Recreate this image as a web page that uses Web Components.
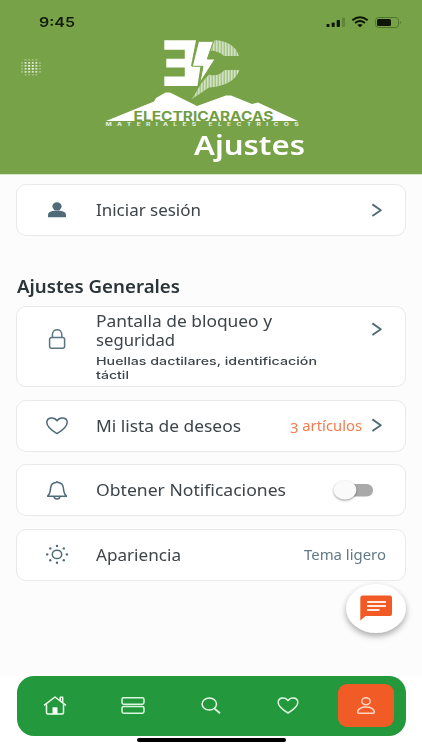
<!DOCTYPE html>
<html lang="es"><head><meta charset="utf-8"><title>Ajustes</title>
<style>html,body{margin:0;height:750px;overflow:hidden;background:#fcfcfd}</style></head>
<body><settings-app></settings-app>
<script>
const define=(name,html,init)=>customElements.define(name,class extends HTMLElement{
  connectedCallback(){
    if(this.shadowRoot)return;
    const t=document.createElement('template');t.innerHTML=html;
    this.attachShadow({mode:'open'}).append(t.content.cloneNode(true));
    if(init)init(this,this.shadowRoot);
  }
});

/* One line of text, stretched horizontally to the width given in "w". */
define('fit-text',`<style>:host{display:block;white-space:nowrap;flex:none}span{display:inline-block;transform-origin:0 50%}</style><span><slot></slot></span>`,(el,root)=>{
  const w=+el.getAttribute('w'),s=root.querySelector('span');
  el.style.width=w+'px';
  s.style.transform='scaleX('+w/s.getBoundingClientRect().width+')';
});

const icons={
  person:['#4f6b78','<g fill="#4f6b78" stroke="none"><ellipse cx="13" cy="8.3" rx="4.6" ry="4"/><path d="M4 19.2v-2.4c0-3.2 5-4.4 9-4.4s9 1.2 9 4.4v2.4z"/></g>'],
  lock:['#5a7480','<rect x="5.6" y="10.5" width="15" height="10.7" rx="2"/><path d="M8.4 10.3V7.8C8.4 1 17.800 1 17.800 7.800V10.300"/>'],
  heart:['#4f6b78','<path d="M13 20.600C8 17.500 2.800 13.500 2.800 9.400C2.800 4.200 10.300 3.400 13 7.800C15.700 3.400 23.200 4.200 23.200 9.400C23.200 13.500 18 17.500 13 20.600z"/>'],
  bell:['#4f6b78','<path d="M3.600 18.200C6.500 16 6 13.500 6.700 9.500C7.200 6.500 9.500 4.700 12 4.500Q13 3 14 4.500C16.500 4.700 18.800 6.500 19.300 9.500C20 13.500 19.500 16 22.400 18.200zM10 18.600C10.400 21.700 15.600 21.700 16 18.600"/>'],
  sun:['#4f6b78','<ellipse cx="13" cy="12.400" rx="4.700" ry="4.200"/><g fill="#4f6b78" stroke="none"><circle cx="13" cy="4" r="1.200"/><circle cx="13" cy="20.700" r="1.200"/><circle cx="3.200" cy="12.400" r="1.200"/><circle cx="22.900" cy="12.400" r="1.200"/><circle cx="6.300" cy="6.400" r="1.200"/><circle cx="19.800" cy="6.400" r="1.200"/><circle cx="6.300" cy="18.300" r="1.200"/><circle cx="19.800" cy="18.300" r="1.200"/></g>'],
  home:['#eaffea','<path d="M2 12.300L13 4L24 12.300M4.500 11.500V19.500Q4.500 21 6 21H20Q21.500 21 21.500 19.500V11.500M18.300 7.500V4.300H20.700V9.500"/><path d="M10.500 21v-6.700h5V21z" fill="#fff" stroke="none"/>'],
  rows:['#dcf7de','<rect x="2" y="4.700" width="22" height="6.500" rx="1.700"/><rect x="2" y="13.600" width="22" height="6.600" rx="1.700"/>'],
  search:['#e4fae5','<ellipse cx="11.300" cy="11" rx="7.200" ry="6"/><path d="M16.500 15.600L22 20.300" stroke-width="1.800"/>'],
  love:['#e4fae5','<path d="M13 20C8.500 17.300 3.200 13.400 3.200 9.600C3.200 4.300 10.300 3.500 13 7.600C15.700 3.500 22.800 4.300 22.800 9.600C22.800 13.400 17.500 17.300 13 20z"/>'],
  user:['#ffd6c5','<ellipse cx="13" cy="8.200" rx="4.200" ry="3.500"/><path d="M4.700 19.300C4.200 12.200 21.800 12.200 21.300 19.300Q21.300 20.200 20.300 20.200H5.700Q4.700 20.200 4.700 19.300z"/>'],
  chevron:['#526b76','<path d="M9.400 6.400L17.800 12.200L9.400 18" stroke-width="1.900"/>']
};
define('line-icon',`<style>:host{display:block;width:26px;height:25px;flex:none}svg{display:block}</style><svg width="26" height="25" viewBox="0 0 26 25" fill="none" stroke-width="1.500" stroke-linejoin="round"></svg>`,(el,root)=>{
  const [c,m]=icons[el.getAttribute('name')],s=root.querySelector('svg');
  s.setAttribute('stroke',c);s.innerHTML=m;
});

define('status-bar',`<style>
:host{display:flex;justify-content:space-between;height:34px;padding:11px 20px 0 39px;box-sizing:border-box;color:#111c08}
fit-text{font:600 13px/23px Inter,sans-serif}
svg{display:block}
</style><fit-text w="36">9:45</fit-text>
<svg width="77" height="23" viewBox="325 11 77 23"><g fill="#0d1608"><rect x="326.500" y="24" width="3" height="3" rx=".8"/><rect x="331.700" y="22.500" width="3" height="4.500" rx=".8"/><rect x="336.700" y="20" width="3.200" height="7" rx=".8"/></g><rect x="342" y="17.500" width="3" height="9.500" rx=".8" fill="#5f853b"/><g fill="none" stroke="#0d1608" stroke-width="1.900"><path d="M352.300 20.200Q360 14.400 367.700 20.200M355 23Q360 19 365 23"/></g><path d="M357.300 25Q360 23 362.700 25L360 27.200z" fill="#0d1608"/><rect x="375.500" y="17.500" width="23" height="10" rx="3" fill="none" stroke="#51742f"/><rect x="377" y="19" width="14" height="7" rx="1.500" fill="#0d1608"/><path d="M400 21v3q2-1.500 0-3" fill="#51742f"/></svg>`);

define('brand-logo',`<style>:host{display:block;width:196px;height:90px}svg{display:block}text{font-family:Inter,"Liberation Sans",sans-serif}</style>
<svg width="196" height="90" viewBox="104 38 196 90"><defs><pattern id="s" width="3" height="4" patternUnits="userSpaceOnUse"><rect width="3" height="4" fill="#a5c488"/><rect width="1.500" height="4" fill="#d3e2c5"/></pattern></defs>
<path fill="url(#s)" d="M214.500 40.300C227 40.500 236 46 239 56H224Q219.500 51 210 50.500zM239.500 70C236 80.500 225 86.500 209 87.500L192 99L201.500 83L209 74.500Q218 77.500 224.500 70z"/>
<path fill="#fff" d="M164.300 40.300H196L191 66H200.500L197.500 86H164.300V76.500H184.800V67.500H166.300V58.700H184.800V49.800H164.300z"/>
<path fill="#fff" stroke="#78a247" stroke-width="1" d="M198.500 41.300H213.500L207.300 59H215L199.800 83L203 66.300H192.300z"/>
<path fill="#fff" d="M106 121L154 101.500L156 98L165.500 92.500H170L197 106L226 95.500H231L252 104L258 102.500L298 121z"/>
<text x="133.500" y="120.800" font-size="13" font-weight="700" fill="#719d42" textLength="140" lengthAdjust="spacingAndGlyphs">ELECTRICARACAS</text>
<text transform="translate(105.500 125.500) scale(1.400 1)" font-size="4.800" font-weight="700" fill="#e8f1de" textLength="138">MATERIALES ELÉCTRICOS</text></svg>`);

define('app-header',`<style>
:host{display:block;height:175px;background:#78a247;color:#fff;border-bottom:1px solid #d8e6ca;box-sizing:border-box}
.row{display:flex;height:96px}.dots{width:84px;padding:24px 0 0 20px}
brand-logo{margin-top:4px}
.title{display:flex;padding-left:194px}
fit-text{font:600 26.500px/34px "Noto Sans",sans-serif;margin-top:-2px}
</style><status-bar></status-bar><div class="row"><div class="dots"><svg width="22" height="19" viewBox="0 0 22 19"></svg></div><brand-logo></brand-logo></div><div class="title"><fit-text w="111">Ajustes</fit-text></div>`,(el,root)=>{
  let m='';
  for(let r=0;r<6;r++)for(let c=0;c<6;c++){
    const d=Math.hypot(c-2.5,r-2.5);
    if(d<3.5)m+=`<rect x="${1+c*3.6}" y="${1+r*3}" width="1.900" height="1.700" fill="#fff" opacity="${d<1?.95:d<2.3?.75:.3}"/>`;
  }
  root.querySelector('svg').innerHTML=m;
});

define('setting-card',`<style>
:host{display:flex;align-items:center;box-sizing:border-box;height:var(--h,52px);margin-left:16px;width:389.500px;border:1.500px solid #e9e9ed;border-radius:10px;background:#fff;padding:0 15.500px 0 26.500px;color:#3d454a;font:450 15.500px/20px "Noto Sans",sans-serif}
.body{flex:1;margin-left:26px}
.icon{margin-top:var(--icon-shift,0)}
.end{display:flex;align-items:center}
</style><div class="icon"></div><div class="body"><slot></slot></div><div class="end"><slot name="end"></slot></div>`,(el,root)=>{
  root.querySelector('.icon').innerHTML=`<line-icon name="${el.getAttribute('icon')}"></line-icon>`;
});

define('toggle-switch',`<style>:host{display:block;width:42px;height:24px}svg{display:block;overflow:visible}</style>
<svg width="42" height="24" viewBox="0 0 42 24"><rect x="8" y="6" width="32" height="12.500" rx="6.250" fill="#a9a9a9"/><ellipse cx="12" cy="12" rx="11.300" ry="9.500" fill="#fafafa" style="filter:drop-shadow(0 1px 1.200px #0006)"/></svg>`);

define('chat-button',`<style>:host{display:block;position:absolute;left:346px;top:584px;width:60px;height:49px;border-radius:50%;background:#fff;box-shadow:0 3px 6px #0005}svg{display:block}</style>
<svg width="60" height="49" viewBox="346 584 60 49"><path fill="#f15a24" d="M362.500 595.500H389.500Q392 595.500 392 598V613.500Q392 616 389.500 616H365.500L360.300 620.500V598Q360.300 595.500 362.500 595.500z"/><path stroke="#ffe9e0" stroke-width="2.200" d="M367 602H386M367 606H386M367 610H379.500"/></svg>`);

define('tab-bar',`<style>
:host{display:block;height:74.500px;background:#fff;padding:0 16.500px}
nav{display:grid;grid-template-columns:repeat(5,77.700px);height:60.500px;border-radius:17px;background:#23983c;box-sizing:border-box;align-items:center;justify-items:center}
.active{display:grid;place-items:center;width:56px;height:43px;border-radius:9px;background:#f15b26}
i{display:block;width:149px;height:4px;border-radius:2px;background:#000;margin:2px auto 0}
</style><nav><line-icon name="home"></line-icon><line-icon name="rows"></line-icon><line-icon name="search"></line-icon><line-icon name="love"></line-icon><div class="active"><line-icon name="user"></line-icon></div></nav><i></i>`);

define('settings-app',`<style>
:host{display:flex;flex-direction:column;position:relative;width:422px;height:750px;overflow:hidden;background:#fcfcfd}
main{flex:1;padding-top:9px;display:flex;flex-direction:column}
h2{margin:38px 0 7px 17px;height:25px;font:600 17.500px/25px "Noto Sans",sans-serif;color:#2a3539}
.list{display:flex;flex-direction:column;gap:12.500px}
.tall{--h:81px;--icon-shift:-14px}.lines>fit-text{height:19.500px;line-height:19.500px}
.lines>.sub{font:450 11px/14px Inter,sans-serif;height:14px;line-height:14px}
.lines>.first{margin-top:3px}
.up{margin-top:-34px}
.orange{color:#f47b50;font-size:13.500px;margin-right:1px}.orange b{font-weight:450;position:relative;top:2.500px}
.theme{color:#617984;font-size:13.500px;margin-right:3px}
toggle-switch{margin-right:14px}
tab-bar{flex:none}
</style><app-header></app-header><main>
<setting-card icon="person"><fit-text w="105">Iniciar sesión</fit-text><line-icon slot="end" name="chevron"></line-icon></setting-card>
<h2><fit-text w="163">Ajustes Generales</fit-text></h2>
<div class="list">
<setting-card class="tall" icon="lock"><div class="lines"><fit-text w="176">Pantalla de bloqueo y</fit-text><fit-text w="79">seguridad</fit-text><fit-text class="sub first" w="221">Huellas dactilares, identificación</fit-text><fit-text class="sub" w="33">táctil</fit-text></div><line-icon class="up" slot="end" name="chevron"></line-icon></setting-card>
<setting-card icon="heart"><fit-text w="145">Mi lista de deseos</fit-text><fit-text class="orange" slot="end" w="72"><b>3</b> artículos</fit-text><line-icon slot="end" name="chevron"></line-icon></setting-card>
<setting-card icon="bell"><fit-text w="190">Obtener Notificaciones</fit-text><toggle-switch slot="end"></toggle-switch></setting-card>
<setting-card icon="sun"><fit-text w="85">Apariencia</fit-text><fit-text class="theme" slot="end" w="82">Tema ligero</fit-text></setting-card>
</div></main><chat-button></chat-button><tab-bar></tab-bar>`);
</script></body></html>
